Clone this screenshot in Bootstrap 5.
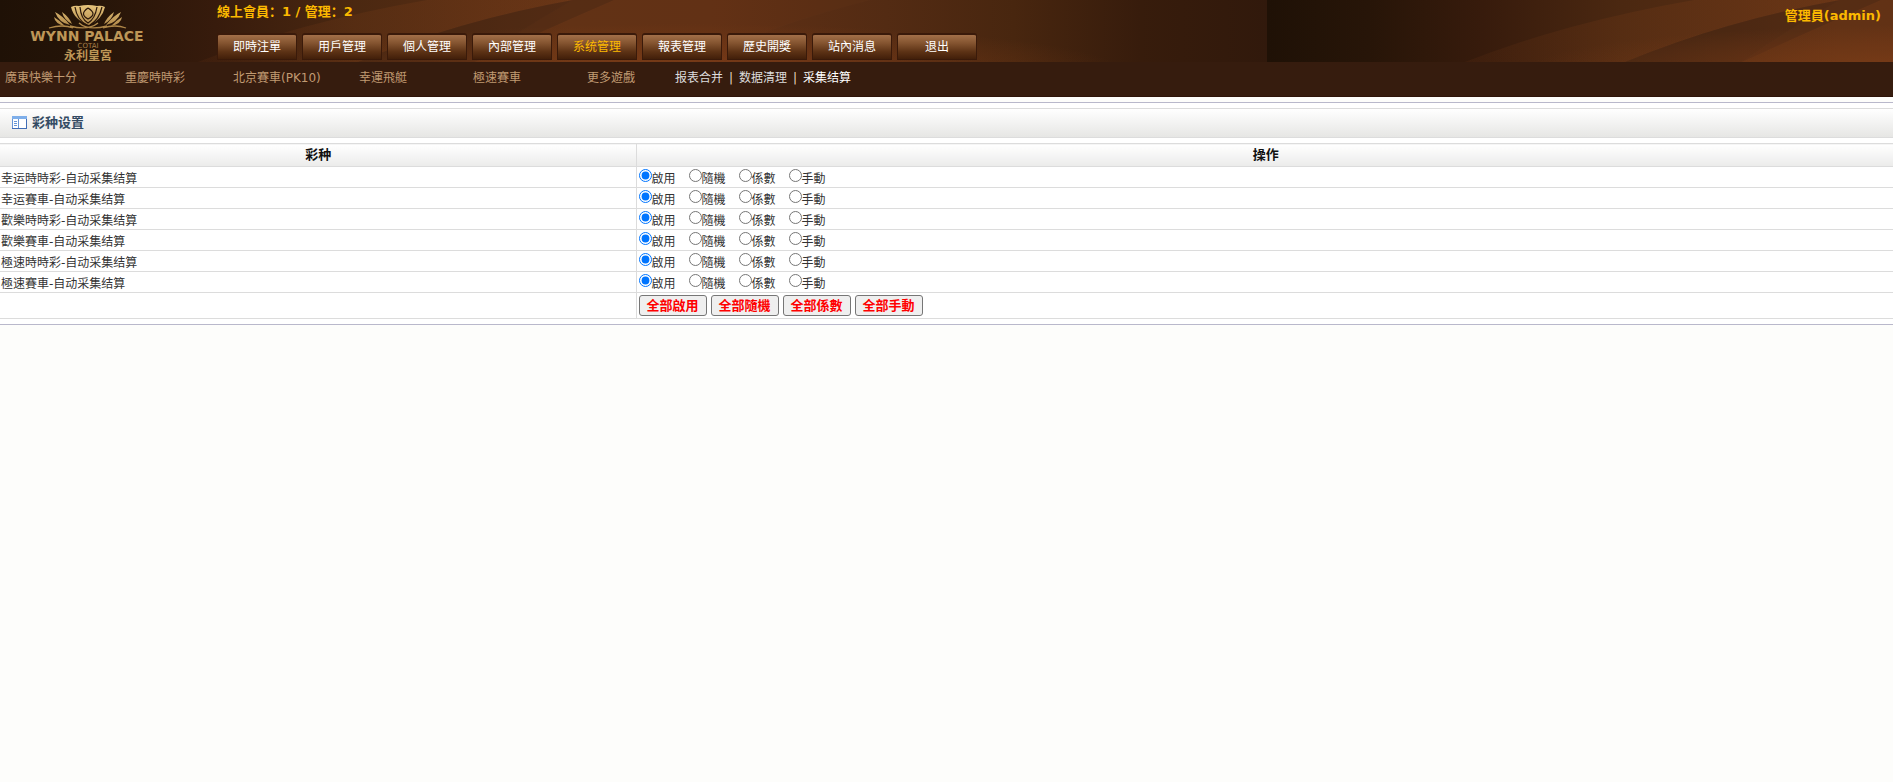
<!DOCTYPE html>
<html lang="zh">
<head>
<meta charset="utf-8">
<meta name="viewport" content="width=device-width, initial-scale=1">
<title>彩种设置</title>
<link href="https://cdn.jsdelivr.net/npm/bootstrap@5.3.0/dist/css/bootstrap.min.css" rel="stylesheet">
<style>
  body {
    font-family: "DejaVu Sans", "Noto Sans CJK SC", sans-serif;
    font-size: 12px;
    line-height: 16px;
    color: #333;
    background: #fdfdfb;
  }
  a { text-decoration: none; }

  /* top banner */
  .banner {
    height: 62px;
    background: #38190c url("data:image/svg+xml,%3Csvg xmlns='http://www.w3.org/2000/svg' width='1267' height='62'%3E%3Cdefs%3E%3ClinearGradient id='a'%3E%3Cstop offset='0' stop-color='%231f1106'/%3E%3Cstop offset='.08' stop-color='%23271508'/%3E%3Cstop offset='.17' stop-color='%23371b0c'/%3E%3Cstop offset='.28' stop-color='%234b2811'/%3E%3Cstop offset='.45' stop-color='%23603115'/%3E%3Cstop offset='.56' stop-color='%23603015'/%3E%3Cstop offset='.7' stop-color='%23532b13'/%3E%3Cstop offset='.8' stop-color='%2348260f'/%3E%3Cstop offset='.9' stop-color='%23371c0c'/%3E%3Cstop offset='1' stop-color='%2331190c'/%3E%3C/linearGradient%3E%3ClinearGradient id='b'%3E%3Cstop offset='0' stop-color='%237a3d18' stop-opacity='.12'/%3E%3Cstop offset='1' stop-color='%23783c18' stop-opacity='.4'/%3E%3C/linearGradient%3E%3CradialGradient id='c' gradientUnits='userSpaceOnUse' cx='0' cy='0' r='1' gradientTransform='translate(690 70) scale(430 46)'%3E%3Cstop offset='0' stop-color='%23843f18' stop-opacity='.7'/%3E%3Cstop offset='1' stop-color='%23843f18' stop-opacity='0'/%3E%3C/radialGradient%3E%3C/defs%3E%3Cpath fill='url(%23a)' d='M0 0h1267v62H0z'/%3E%3Cpath fill='url(%23b)' d='M198 62Q300 22 427 0H573Q460 20 358 62z'/%3E%3Cpath fill='%233a2010' fill-opacity='.35' d='M358 62Q460 20 573 0H614Q540 32 475 62z'/%3E%3Cpath fill='url(%23c)' d='M0 0h1267v62H0z'/%3E%3Cpath fill='%23803f18' fill-opacity='.08' d='M695 62Q770 25 870 0H573Q520 30 475 62z'/%3E%3C/svg%3E") repeat-x;
  }
  .brand-col { width: 217px; }
  .brand-link { margin-left: 24px; }
  .gold { color: #fcb900; font-size: 13px; font-weight: bold; }
  .main-tabs { gap: 5px; margin-bottom: 2px; }
  .main-tabs a {
    width: 80px;
    height: 27px;
    line-height: 24px;
    text-align: center;
    color: #fff;
    border: solid #3a1a0a;
    border-width: 2px 1px 1px;
    border-radius: 3px 3px 0 0;
    background: linear-gradient(#a37049, #83532f 35%, #5c3215 70%, #421f0a);
  }
  .main-tabs a.active { color: #fcb900; }

  /* game bar below the banner */
  .game-bar {
    height: 35px;
    padding: 8px 0 0 5px;
    background: #361c0e;
    border-bottom: 1px solid #2e1409;
  }
  .games {
    display: grid;
    grid-template-columns: 120px 108px 126px 114px 114px 88px;
  }
  .games a { color: #c09a72; }
  .tools a { color: #ddd; }
  .tools a.active { color: #fff; }
  .tools span { width: 16px; text-align: center; color: #ecd9c4; }

  /* content */
  .content-box {
    margin-top: 5px;
    padding: 5px 0;
    background: #fff;
    border-top: 1px solid #b9b8cb;
    border-bottom: 1px solid #b9b8cb;
    box-shadow: 0 2px #ebebf1;
  }
  .title-bar {
    height: 30px;
    padding: 0 12px;
    margin-bottom: 5px;
    border: solid #dcdcdc;
    border-width: 1px 0;
    background: linear-gradient(#fff, #e6e6e4);
  }
  .title-bar h1 { font-size: 13px; line-height: 16px; font-weight: bold; color: #344b63; }
  .lottery-table { width: 100%; table-layout: fixed; }
  .lottery-table th, .lottery-table td {
    padding: 0 0 0 1px;
    height: 21px;
    border: solid #dcdcdc;
    border-width: 1px 0;
  }
  .lottery-table tbody td:first-child { padding-top: 3px; }
  .lottery-table th:last-child, .lottery-table td:last-child {
    border-left-width: 1px;
    padding-left: 2px;
  }
  .lottery-table th {
    height: 23px;
    font-size: 13px;
    text-align: center;
    color: #111;
    background: linear-gradient(#fff, #ebebea);
  }
  .name-col { width: 33.6%; }
  .lottery-table tfoot td { height: 26px; }
  .modes { gap: 13px; height: 20px; }
  .modes label { display: flex; height: 20px; }
  .modes input { width: 13px; height: 13px; margin: 2px 0 0; }
  .modes span { padding-top: 4px; }
  .bulk-btn {
    width: 68px;
    height: 21px;
    padding: 0;
    font-size: 13px;
    line-height: 17px;
    font-weight: bold;
    color: #f00;
    background: #efefef;
    border: 1px solid #767676;
    border-radius: 3px;
  }
</style>
</head>
<body>
<header>
  <div class="banner d-flex">
    <div class="brand-col flex-shrink-0">
      <a class="brand-link d-block" href="#">
        <svg class="d-block" width="130" height="62" viewBox="0 0 130 62" role="img" aria-label="Wynn Palace">
          <defs>
            <linearGradient id="goldFill" gradientUnits="userSpaceOnUse" x1="0" y1="5" x2="0" y2="30">
              <stop offset="0" stop-color="#e6c47c"/><stop offset="1" stop-color="#a67d40"/>
            </linearGradient>
          </defs>
          <g fill="none" stroke="url(#goldFill)">
            <path fill="url(#goldFill)" stroke="none" d="M47 7Q51 5 55 6Q64 4 73 6Q77 5 81 7Q78 20 65 25Q50 20 47 7z"/>
            <path stroke="#2a170a" stroke-width="1.200" d="M51 7Q53 20 63 25M56 7Q57 19 64 23Q71 19 73 7M78 7Q75 20 66 25M64 8Q55 14 64 19Q74 14 64 8"/>
            <path fill="url(#goldFill)" stroke="none" d="M31 12Q39 16 46 25Q35 23 31 12zM30 17Q35 20 41 26Q31 24 30 17zM38 12Q45 17 48 24Q40 20 38 12zM97 12Q89 16 82 25Q93 23 97 12zM98 17Q93 20 87 26Q97 24 98 17zM90 12Q83 17 80 24Q88 20 90 12z"/>
            <path stroke-width="1.300" d="M25 28Q39 24 49 28M55 23Q64 31 83 26M74 23Q64 31 46 26M79 28Q91 24 102 28"/>
          </g>
          <g fill="#bd9657" text-anchor="middle" font-family="'DejaVu Sans', 'Noto Sans CJK TC', sans-serif">
            <text x="63" y="41" font-size="14" font-weight="bold">WYNN PALACE</text>
            <text x="64" y="48" font-size="7" fill="#a67f48">COTAI</text>
            <text x="64" y="60" font-size="12" font-weight="bold">永利皇宮</text>
          </g>
        </svg>
      </a>
    </div>
    <div class="flex-grow-1 d-flex flex-column">
      <div class="gold pt-1">線上會員：1 / 管理：2</div>
      <nav class="main-tabs d-flex mt-auto" aria-label="主選單">
        <a href="#">即時注單</a>
        <a href="#">用戶管理</a>
        <a href="#">個人管理</a>
        <a href="#">內部管理</a>
        <a href="#" class="active" aria-current="page">系统管理</a>
        <a href="#">報表管理</a>
        <a href="#">歷史開獎</a>
        <a href="#">站內消息</a>
        <a href="#">退出</a>
      </nav>
    </div>
    <div class="gold pt-2 pe-2 me-1">管理員(admin)</div>
  </div>
  <div class="game-bar d-flex">
    <nav class="games" aria-label="遊戲">
      <a href="#">廣東快樂十分</a>
      <a href="#">重慶時時彩</a>
      <a href="#">北京賽車(PK10)</a>
      <a href="#">幸運飛艇</a>
      <a href="#">極速賽車</a>
      <a href="#">更多遊戲</a>
    </nav>
    <nav class="tools d-flex" aria-label="系统管理">
      <a href="#">报表合并</a><span>|</span>
      <a href="#">数据清理</a><span>|</span>
      <a href="#" class="active">采集结算</a>
    </nav>
  </div>
</header>

<main class="content-box">
  <div class="title-bar d-flex align-items-center">
    <svg class="me-1" width="16" height="14" viewBox="0 0 16 14" aria-hidden="true">
      <path fill="#fff" stroke="#6795d6" d="M.5.5h14v12H.5z"/>
      <path fill="#7fafea" d="M0 0h15v3H0z"/>
      <path stroke="#416db5" d="M14.500 3v10M0 12.500h15"/>
      <path stroke="#6795d6" d="M6.500 3v9M2 5.500h3M2 7.500h3M2 9.500h3"/>
    </svg>
    <h1 class="m-0">彩种设置</h1>
  </div>
  <form>
    <table class="lottery-table">
      <thead>
        <tr><th class="name-col" scope="col">彩种</th><th scope="col">操作</th></tr>
      </thead>
      <tbody id="lotteryRows"></tbody>
      <tfoot>
        <tr>
          <td></td>
          <td>
            <div class="d-flex gap-1">
              <button type="button" class="bulk-btn" data-mode="0">全部啟用</button>
              <button type="button" class="bulk-btn" data-mode="1">全部隨機</button>
              <button type="button" class="bulk-btn" data-mode="2">全部係數</button>
              <button type="button" class="bulk-btn" data-mode="3">全部手動</button>
            </div>
          </td>
        </tr>
      </tfoot>
    </table>
  </form>
</main>

<script src="https://cdn.jsdelivr.net/npm/bootstrap@5.3.0/dist/js/bootstrap.bundle.min.js"></script>
<script>
  const lotteries = ['幸运時時彩', '幸运賽車', '歡樂時時彩', '歡樂賽車', '極速時時彩', '極速賽車'];
  const modes = ['啟用', '隨機', '係數', '手動'];
  document.getElementById('lotteryRows').innerHTML = lotteries.map((name, row) => `
    <tr>
      <td>${name}-自动采集结算</td>
      <td><div class="modes d-flex">${modes.map((mode, i) => `
        <label><input type="radio" name="lottery${row}" value="${i}" ${i ? '' : 'checked'}><span>${mode}</span></label>`).join('')}
      </div></td>
    </tr>`).join('');
  document.querySelectorAll('.bulk-btn').forEach(button => button.addEventListener('click', () => {
    document.querySelectorAll(`input[value="${button.dataset.mode}"]`).forEach(radio => radio.checked = true);
  }));
</script>
</body>
</html>
